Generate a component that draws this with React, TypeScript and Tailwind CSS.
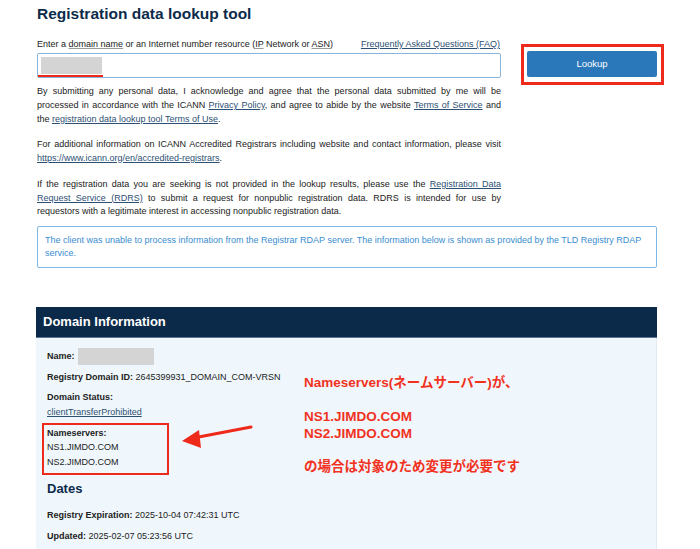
import React from "react";

const J = "block text-justify [text-align-last:justify]";

export default function App() {
  return (
    <div className="relative h-[549px] w-[700px] overflow-hidden bg-white font-['Liberation_Sans','Noto_Sans_CJK_JP',sans-serif] text-[#222]">
      <div className="w-[657px] pl-[37px] pt-[5px]">
        <h1 className="text-[15.5px] font-bold leading-[18px] text-[#0c2b4b]">Registration data lookup tool</h1>
        <div className="mt-[15px] flex gap-[26px]">
          <div className="w-[464px]">
            <div className="flex justify-between text-[9px] leading-[12px]">
              <span>
                Enter a <span className="underline decoration-[#999]">domain name</span> or an Internet number resource (
                <span className="underline decoration-[#999]">IP</span> Network or <span className="underline decoration-[#999]">ASN</span>)
              </span>
              <span className="mr-[1px] text-[#2d4f73] underline">Frequently Asked Questions (FAQ)</span>
            </div>
            <div className="relative mt-[3px] h-[25px] rounded-[2px] border border-[#8ab4dc]">
              <div className="absolute left-[3px] top-[3px] h-[17px] w-[61px] bg-[#d4d4d4]" />
              <div className="absolute left-[0px] top-[21px] h-[2px] w-[65px] bg-[#ee2a1b]" />
            </div>
            <div className="mt-[6px] text-[9px] leading-[14px]">
              <span className={J}>By submitting any personal data, I acknowledge and agree that the personal data submitted by me will be</span>
              <span className={J}>
                processed in accordance with the ICANN <span className="text-[#2d4f73] underline">Privacy Policy</span>, and agree to abide by the website{" "}
                <span className="text-[#2d4f73] underline">Terms of Service</span> and
              </span>
              <span className="block">
                the <span className="text-[#2d4f73] underline">registration data lookup tool Terms of Use</span>.
              </span>
            </div>
            <div className="mt-[12px] text-[9px] leading-[13.5px]">
              <span className={J}>For additional information on ICANN Accredited Registrars including website and contact information, please visit</span>
              <span className="block">
                <span className="text-[#2d4f73] underline">https://www.icann.org/en/accredited-registrars</span>.
              </span>
            </div>
            <div className="mt-[13px] text-[9px] leading-[13.5px]">
              <span className={J}>
                If the registration data you are seeking is not provided in the lookup results, please use the{" "}
                <span className="text-[#2d4f73] underline">Registration Data</span>
              </span>
              <span className={J}>
                <span className="text-[#2d4f73] underline">Request Service (RDRS)</span> to submit a request for nonpublic registration data. RDRS is intended for use by
              </span>
              <span className="block">requestors with a legitimate interest in accessing nonpublic registration data.</span>
            </div>
          </div>
          <div className="relative mt-[13px] h-[26px] w-[130px]">
            <div className="absolute -left-[6px] -top-[7px] h-[41px] w-[143px] border-[3px] border-[#ee2a1b]" />
            <div className="flex h-full w-full items-center justify-center rounded-[2px] bg-[#2a77ba] text-[9.5px] text-white">Lookup</div>
          </div>
        </div>
        <div className="mt-[7px] w-[620px] rounded-[2px] border border-[#7fb8e4] px-[7px] py-[7px] text-[9px] leading-[13px] text-[#3a8dd0]">
          The client was unable to process information from the Registrar RDAP server. The information below is shown as provided by the TLD Registry RDAP
          <br />
          service.
        </div>
        <div className="-ml-px mt-[39px] w-[621px]">
          <div className="flex h-[31px] items-center border-b border-[#5a7896] bg-[#0b2948] pl-[7px] text-[13px] font-bold text-white">Domain Information</div>
          <div className="relative h-[260px] border-r border-[#e3ebf2] bg-[#f0f7fc] pl-[11px] pt-[10px] text-[9px] leading-[12px]">
            <div className="flex h-[17px] items-center">
              <span className="font-bold">Name:</span>
              <div className="ml-[3px] h-[17px] w-[76px] bg-[#d4d4d4]" />
            </div>
            <div className="mt-[6px]">
              <span className="font-bold">Registry Domain ID:</span> 2645399931_DOMAIN_COM-VRSN
            </div>
            <div className="mt-[8px] font-bold">Domain Status:</div>
            <div className="mt-[3px] text-[#2d4f73] underline">clientTransferProhibited</div>
            <div className="relative mt-[8px] leading-[14.5px]">
              <div className="absolute -left-[5px] -top-[3px] h-[52px] w-[127px] border-[2.5px] border-[#ee2a1b]" />
              <div className="font-bold">Nameservers:</div>
              <div>NS1.JIMDO.COM</div>
              <div>NS2.JIMDO.COM</div>
            </div>
            <div className="mt-[11.5px] text-[13px] font-bold leading-[16px] text-[#0c2b4b]">Dates</div>
            <div className="mt-[12px]">
              <span className="font-bold">Registry Expiration:</span> 2025-10-04 07:42:31 UTC
            </div>
            <div className="mt-[9px]">
              <span className="font-bold">Updated:</span> 2025-02-07 05:23:56 UTC
            </div>
            <div className="absolute left-[268px] top-[37px] text-[13.5px] font-bold leading-[16.5px] text-[#f0321f]">
              <div>Nameservers(ネームサーバー)が、</div>
              <div>&nbsp;</div>
              <div className="mt-[1.5px]">NS1.JIMDO.COM</div>
              <div>NS2.JIMDO.COM</div>
              <div>&nbsp;</div>
              <div>の場合は対象のため変更が必要です</div>
            </div>
          </div>
        </div>
      </div>
      <svg className="pointer-events-none absolute inset-0" width="700" height="549" viewBox="0 0 700 549">
        <line x1="251" y1="427" x2="196" y2="437.5" stroke="#ee2a1b" strokeWidth="3" strokeLinecap="round" />
        <polygon points="182,441 199,430 201,448" fill="#ee2a1b" />
      </svg>
    </div>
  );
}
